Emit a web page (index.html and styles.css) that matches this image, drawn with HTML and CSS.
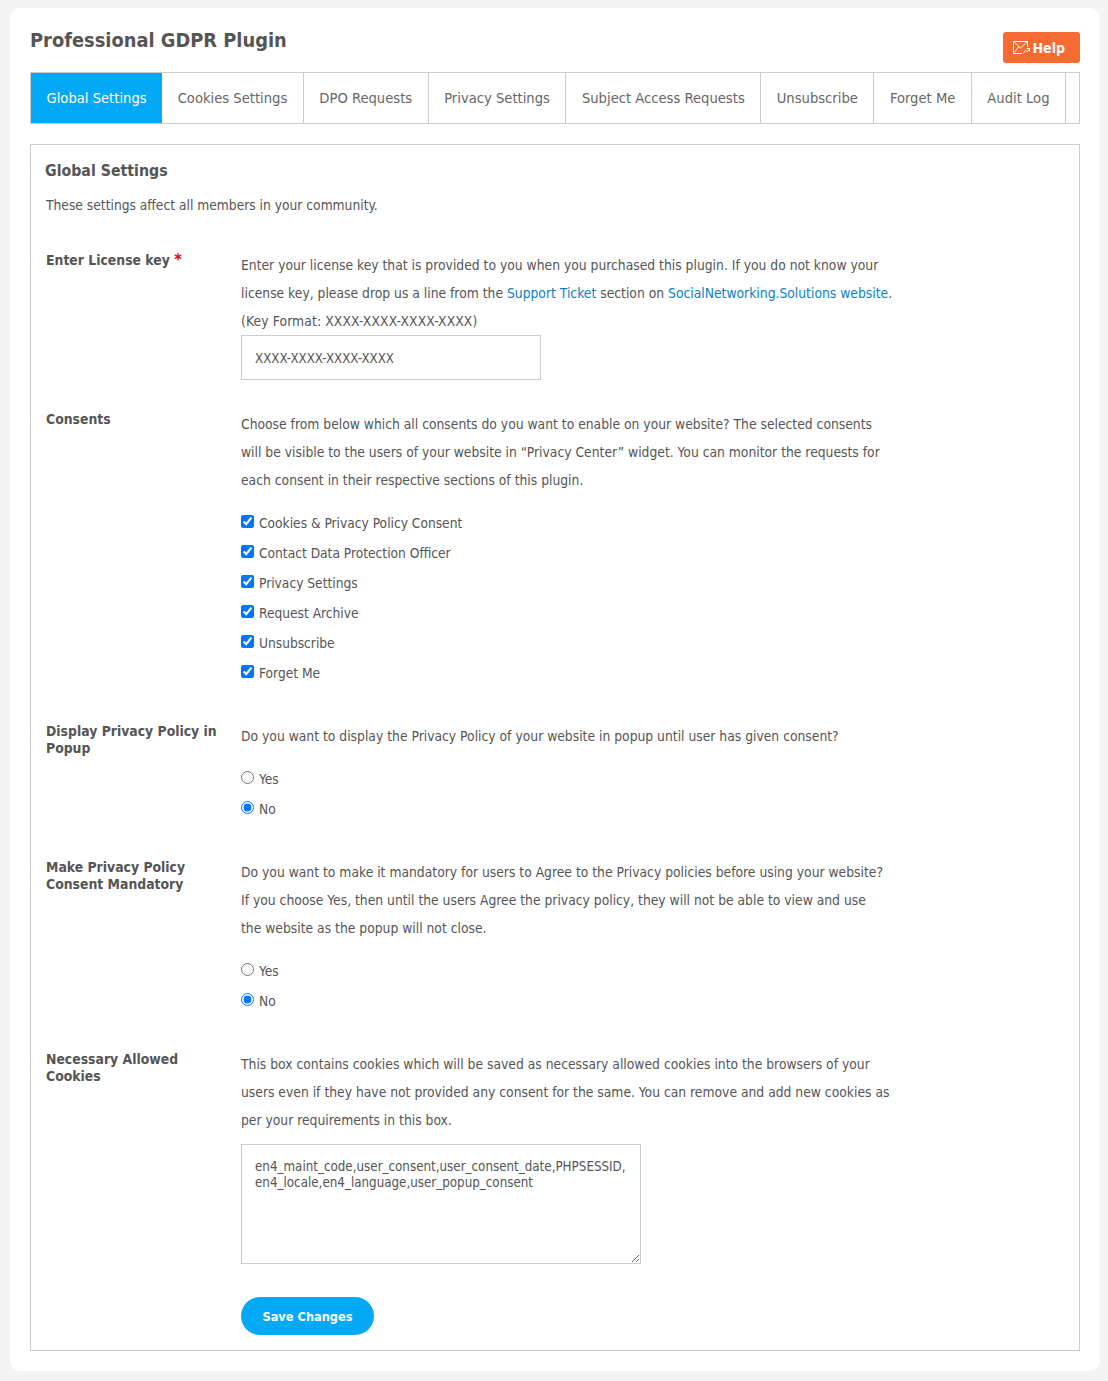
FILE: index.html
```html
<!DOCTYPE html>
<html lang="en">
  <head>
    <meta charset="utf-8" />
    <title>Professional GDPR Plugin</title>
    <link rel="stylesheet" href="styles.css">
  </head>
  <body>
    <div class="page">
      <div class="page__head">
        <h1 class="page__title">Professional GDPR Plugin</h1>
        <a class="help-btn" href="#">
          <svg class="help-btn__icon" width="17" height="13" viewBox="0 0 17 13" fill="none" stroke="currentColor" stroke-width="1">
            <path d="M9 12.5H.5V.5h14V6" />
            <path d="M.5.5l7 6.5 7-6.5" />
            <path d="M.5 12.5L5.5 6" />
            <path d="M10 12.5l2.5-3 1.5 1 2.5-2" />
            <path d="M13.5 7.5h3v3" />
          </svg>
          Help
        </a>
      </div>

      <ul class="tabs">
        <li class="tabs__item tabs__item--active"><a href="#">Global Settings</a></li>
        <li class="tabs__item"><a href="#">Cookies Settings</a></li>
        <li class="tabs__item"><a href="#">DPO Requests</a></li>
        <li class="tabs__item"><a href="#">Privacy Settings</a></li>
        <li class="tabs__item"><a href="#">Subject Access Requests</a></li>
        <li class="tabs__item"><a href="#">Unsubscribe</a></li>
        <li class="tabs__item"><a href="#">Forget Me</a></li>
        <li class="tabs__item"><a href="#">Audit Log</a></li>
      </ul>

      <form class="settings">
        <h3 class="settings__title">Global Settings</h3>
        <p class="settings__desc">These settings affect all members in your community.</p>

        <div class="row row--input">
          <label class="row__label">Enter License key <span class="required">*</span></label>
          <div class="row__body">
            <p class="row__text">Enter your license key that is provided to you when you purchased this plugin. If you do not know your license key, please drop us a line from the <a href="#">Support Ticket</a> section on <a href="#">SocialNetworking.Solutions website</a>.<br /><span class="key-format">(Key Format: XXXX-XXXX-XXXX-XXXX)</span></p>
            <input class="text-input" type="text" value="XXXX-XXXX-XXXX-XXXX" />
          </div>
        </div>

        <div class="row">
          <label class="row__label">Consents</label>
          <div class="row__body">
            <p class="row__text">Choose from below which all consents do you want to enable on your website? The selected consents will be visible to the users of your website in “Privacy Center” widget. You can monitor the requests for each consent in their respective sections of this plugin.</p>
            <ul class="options">
              <li><label><input type="checkbox" checked />Cookies &amp; Privacy Policy Consent</label></li>
              <li><label><input type="checkbox" checked />Contact Data Protection Officer</label></li>
              <li><label><input type="checkbox" checked />Privacy Settings</label></li>
              <li><label><input type="checkbox" checked />Request Archive</label></li>
              <li><label><input type="checkbox" checked />Unsubscribe</label></li>
              <li><label><input type="checkbox" checked />Forget Me</label></li>
            </ul>
          </div>
        </div>

        <div class="row">
          <label class="row__label">Display Privacy Policy in Popup</label>
          <div class="row__body">
            <p class="row__text">Do you want to display the Privacy Policy of your website in popup until user has given consent?</p>
            <ul class="options">
              <li><label><input type="radio" name="popup" />Yes</label></li>
              <li><label><input type="radio" name="popup" checked />No</label></li>
            </ul>
          </div>
        </div>

        <div class="row">
          <label class="row__label">Make Privacy Policy Consent Mandatory</label>
          <div class="row__body">
            <p class="row__text">Do you want to make it mandatory for users to Agree to the Privacy policies before using your website?<br />If you choose Yes, then until the users Agree the privacy policy, they will not be able to view and use<br />the website as the popup will not close.</p>
            <ul class="options">
              <li><label><input type="radio" name="mandatory" />Yes</label></li>
              <li><label><input type="radio" name="mandatory" checked />No</label></li>
            </ul>
          </div>
        </div>

        <div class="row">
          <label class="row__label">Necessary Allowed Cookies</label>
          <div class="row__body">
            <p class="row__text">This box contains cookies which will be saved as necessary allowed cookies into the browsers of your users even if they have not provided any consent for the same. You can remove and add new cookies as per your requirements in this box.</p>
            <textarea class="text-area">en4_maint_code,user_consent,user_consent_date,PHPSESSID,
en4_locale,en4_language,user_popup_consent</textarea>
            <button class="save-btn" type="button">Save Changes</button>
          </div>
        </div>
      </form>
    </div>
  </body>
</html>
```

FILE: styles.css
```css
* {
  box-sizing: border-box;
}
html {
  background-color: #f4f4f4;
}
body {
  margin: 0;
  padding: 8px 8px 10px 10px;
  font-family: "DejaVu Sans", sans-serif;
  font-stretch: condensed;
  font-size: 13px;
  color: #555;
}
a {
  text-decoration: none;
}
.page {
  width: 1090px;
  height: 1363px;
  padding: 0 20px;
  background-color: #fff;
  border-radius: 10px;
}
.page__head {
  display: flex;
  justify-content: space-between;
  height: 64px;
}
.page__title {
  margin: 20px 0 0;
  font-size: 19.85px;
  line-height: 25px;
  font-weight: bold;
}
.help-btn {
  display: flex;
  align-items: center;
  gap: 3px;
  align-self: flex-start;
  height: 31px;
  margin-top: 24px;
  padding: 0 15px 0 10px;
  background-color: #f66a33;
  border-radius: 3px;
  color: #fff;
  font-size: 14px;
  font-weight: bold;
}
.help-btn__icon {
  flex: none;
}
.tabs {
  display: flex;
  height: 52px;
  margin: 0 0 20px;
  padding: 0;
  list-style: none;
  border: 1px solid #ccc;
}
.tabs__item {
  border-right: 1px solid #ccc;
  font-size: 14.63px;
}
.tabs__item a {
  display: block;
  padding: 0 15.5px;
  line-height: 50px;
  color: #666;
}
.tabs__item--active {
  background-color: #03a9f4;
  border-right: 0;
}
.tabs__item--active a {
  color: #fff;
}
.settings {
  height: 1207px;
  padding: 15px 14px 0;
  border: 1px solid #ccc;
}
.settings__title {
  margin: 0;
  font-size: 15.75px;
  line-height: 22px;
  font-weight: bold;
}
.settings__desc {
  margin: 13px 0 36px 1px;
  font-size: 13.7px;
  line-height: 20px;
}
.row {
  display: flex;
  margin-bottom: 34px;
}
.row--input {
  margin-bottom: 30px;
}
.row__label {
  flex: none;
  width: 196px;
  padding: 1px 16px 0 1px;
  font-size: 13.85px;
  line-height: 17px;
  font-weight: bold;
}
.row__body {
  width: 655px;
}
.row__text {
  margin: 0;
  font-size: 13.75px;
  line-height: 28px;
}
.row__text a {
  color: #0d7fc4;
}
.key-format {
  letter-spacing: 0.12px;
}
.required {
  color: #e00;
  font-size: 16px;
  line-height: 14px;
}
.options {
  margin: 14px 0 0;
  padding: 0;
  list-style: none;
  font-size: 13.65px;
}
.options li {
  height: 30px;
  line-height: 30px;
}
.options label {
  display: flex;
  align-items: center;
}
.options input {
  flex: none;
  margin: 0 5px 4px 0;
}
.text-input {
  display: block;
  width: 300px;
  height: 45px;
  padding: 2px 13px 0;
  border: 1px solid #ccc;
  font: inherit;
  font-size: 13.2px;
  color: #555;
}
.text-area {
  display: block;
  width: 400px;
  height: 120px;
  margin-top: 10px;
  padding: 14px 13px;
  border: 1px solid #ccc;
  font: inherit;
  font-size: 13.27px;
  line-height: 16px;
  color: #555;
}
.save-btn {
  display: block;
  width: 133px;
  height: 38px;
  margin-top: 33px;
  padding: 0;
  background-color: #03a9f4;
  border: 0;
  border-radius: 19px;
  color: #fff;
  font: inherit;
  font-size: 12.7px;
  font-weight: bold;
}
```
